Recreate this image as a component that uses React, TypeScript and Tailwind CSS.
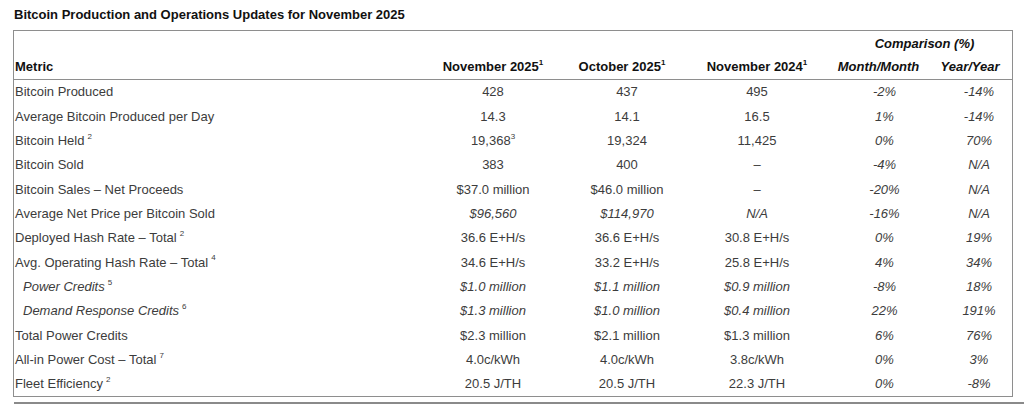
type Row = {
  label: string;
  sup?: string;
  sub?: boolean;
  valueItalic?: boolean;
  values: string[];
  valueSup?: string;
};

const rows: Row[] = [
  { label: "Bitcoin Produced", values: ["428", "437", "495", "-2%", "-14%"] },
  { label: "Average Bitcoin Produced per Day", values: ["14.3", "14.1", "16.5", "1%", "-14%"] },
  { label: "Bitcoin Held", sup: "2", values: ["19,368", "19,324", "11,425", "0%", "70%"], valueSup: "3" },
  { label: "Bitcoin Sold", values: ["383", "400", "–", "-4%", "N/A"] },
  { label: "Bitcoin Sales – Net Proceeds", values: ["$37.0 million", "$46.0 million", "–", "-20%", "N/A"] },
  { label: "Average Net Price per Bitcoin Sold", valueItalic: true, values: ["$96,560", "$114,970", "N/A", "-16%", "N/A"] },
  { label: "Deployed Hash Rate – Total", sup: "2", values: ["36.6 E+H/s", "36.6 E+H/s", "30.8 E+H/s", "0%", "19%"] },
  { label: "Avg. Operating Hash Rate – Total", sup: "4", values: ["34.6 E+H/s", "33.2 E+H/s", "25.8 E+H/s", "4%", "34%"] },
  { label: "Power Credits", sup: "5", sub: true, valueItalic: true, values: ["$1.0 million", "$1.1 million", "$0.9 million", "-8%", "18%"] },
  { label: "Demand Response Credits", sup: "6", sub: true, valueItalic: true, values: ["$1.3 million", "$1.0 million", "$0.4 million", "22%", "191%"] },
  { label: "Total Power Credits", values: ["$2.3 million", "$2.1 million", "$1.3 million", "6%", "76%"] },
  { label: "All-in Power Cost – Total", sup: "7", values: ["4.0c/kWh", "4.0c/kWh", "3.8c/kWh", "0%", "3%"] },
  { label: "Fleet Efficiency", sup: "2", values: ["20.5 J/TH", "20.5 J/TH", "22.3 J/TH", "0%", "-8%"] },
];

const cols = "grid grid-cols-[413px_132px_132px_132px_111px_1fr]";

export default function App() {
  return (
    <div className="w-[1024px] h-[405px] bg-white overflow-hidden font-['Liberation_Sans',Arial,sans-serif] text-[#3c3c3c]">
      <div className="pt-[7px] pl-[14px] text-[13px] leading-[16px] font-bold text-[#111]">
        Bitcoin Production and Operations Updates for November 2025
      </div>

      {/* TABLE */}
      <div className="mt-[7px] ml-[13px] w-[1000px] border border-[#8e8e8e]">
        <div className="border-b border-[#8e8e8e] text-[13px] font-bold text-[#111]">
          <div className={`${cols} h-[24px] items-center`}>
            <div className="col-start-5 col-span-2 text-center italic pl-[14px] pt-[1px]">Comparison (%)</div>
          </div>
          <div className={`${cols} h-[24px] items-center`}>
            <div className="pl-[1px]">Metric</div>
            <div className="text-center">
              November 2025<sup className="text-[8px] -top-[0.8em]">1</sup>
            </div>
            <div className="text-center pr-[6px]">
              October 2025<sup className="text-[8px] -top-[0.8em]">1</sup>
            </div>
            <div className="text-center">
              November 2024<sup className="text-[8px] -top-[0.8em]">1</sup>
            </div>
            <div className="text-center italic">Month/Month</div>
            <div className="text-center italic pr-[6px]">Year/Year</div>
          </div>
        </div>

        {rows.map((r) => (
          <div key={r.label} className={`${cols} h-[24.33px] items-center text-[13px]`}>
            <div className={r.sub ? "pl-[9px] italic" : "pl-[1px]"}>
              {r.label}
              {r.sup && <sup className="ml-[3px] text-[8px] -top-[0.8em] not-italic">{r.sup}</sup>}
            </div>
            {r.values.map((v, i) => (
              <div
                key={i}
                className={`text-center ${i >= 3 ? "italic pl-[12px]" : ""} ${
                  i < 3 && r.valueItalic && v !== "–" ? "italic" : ""
                } ${i === 1 ? "pl-[4px]" : ""}`}
              >
                {v}
                {i === 0 && r.valueSup && <sup className="text-[8px] -top-[0.8em]">{r.valueSup}</sup>}
              </div>
            ))}
          </div>
        ))}
      </div>

      <div className="mt-[5px] ml-[14px] h-[2px] bg-[#8a8a8a]" />
    </div>
  );
}
